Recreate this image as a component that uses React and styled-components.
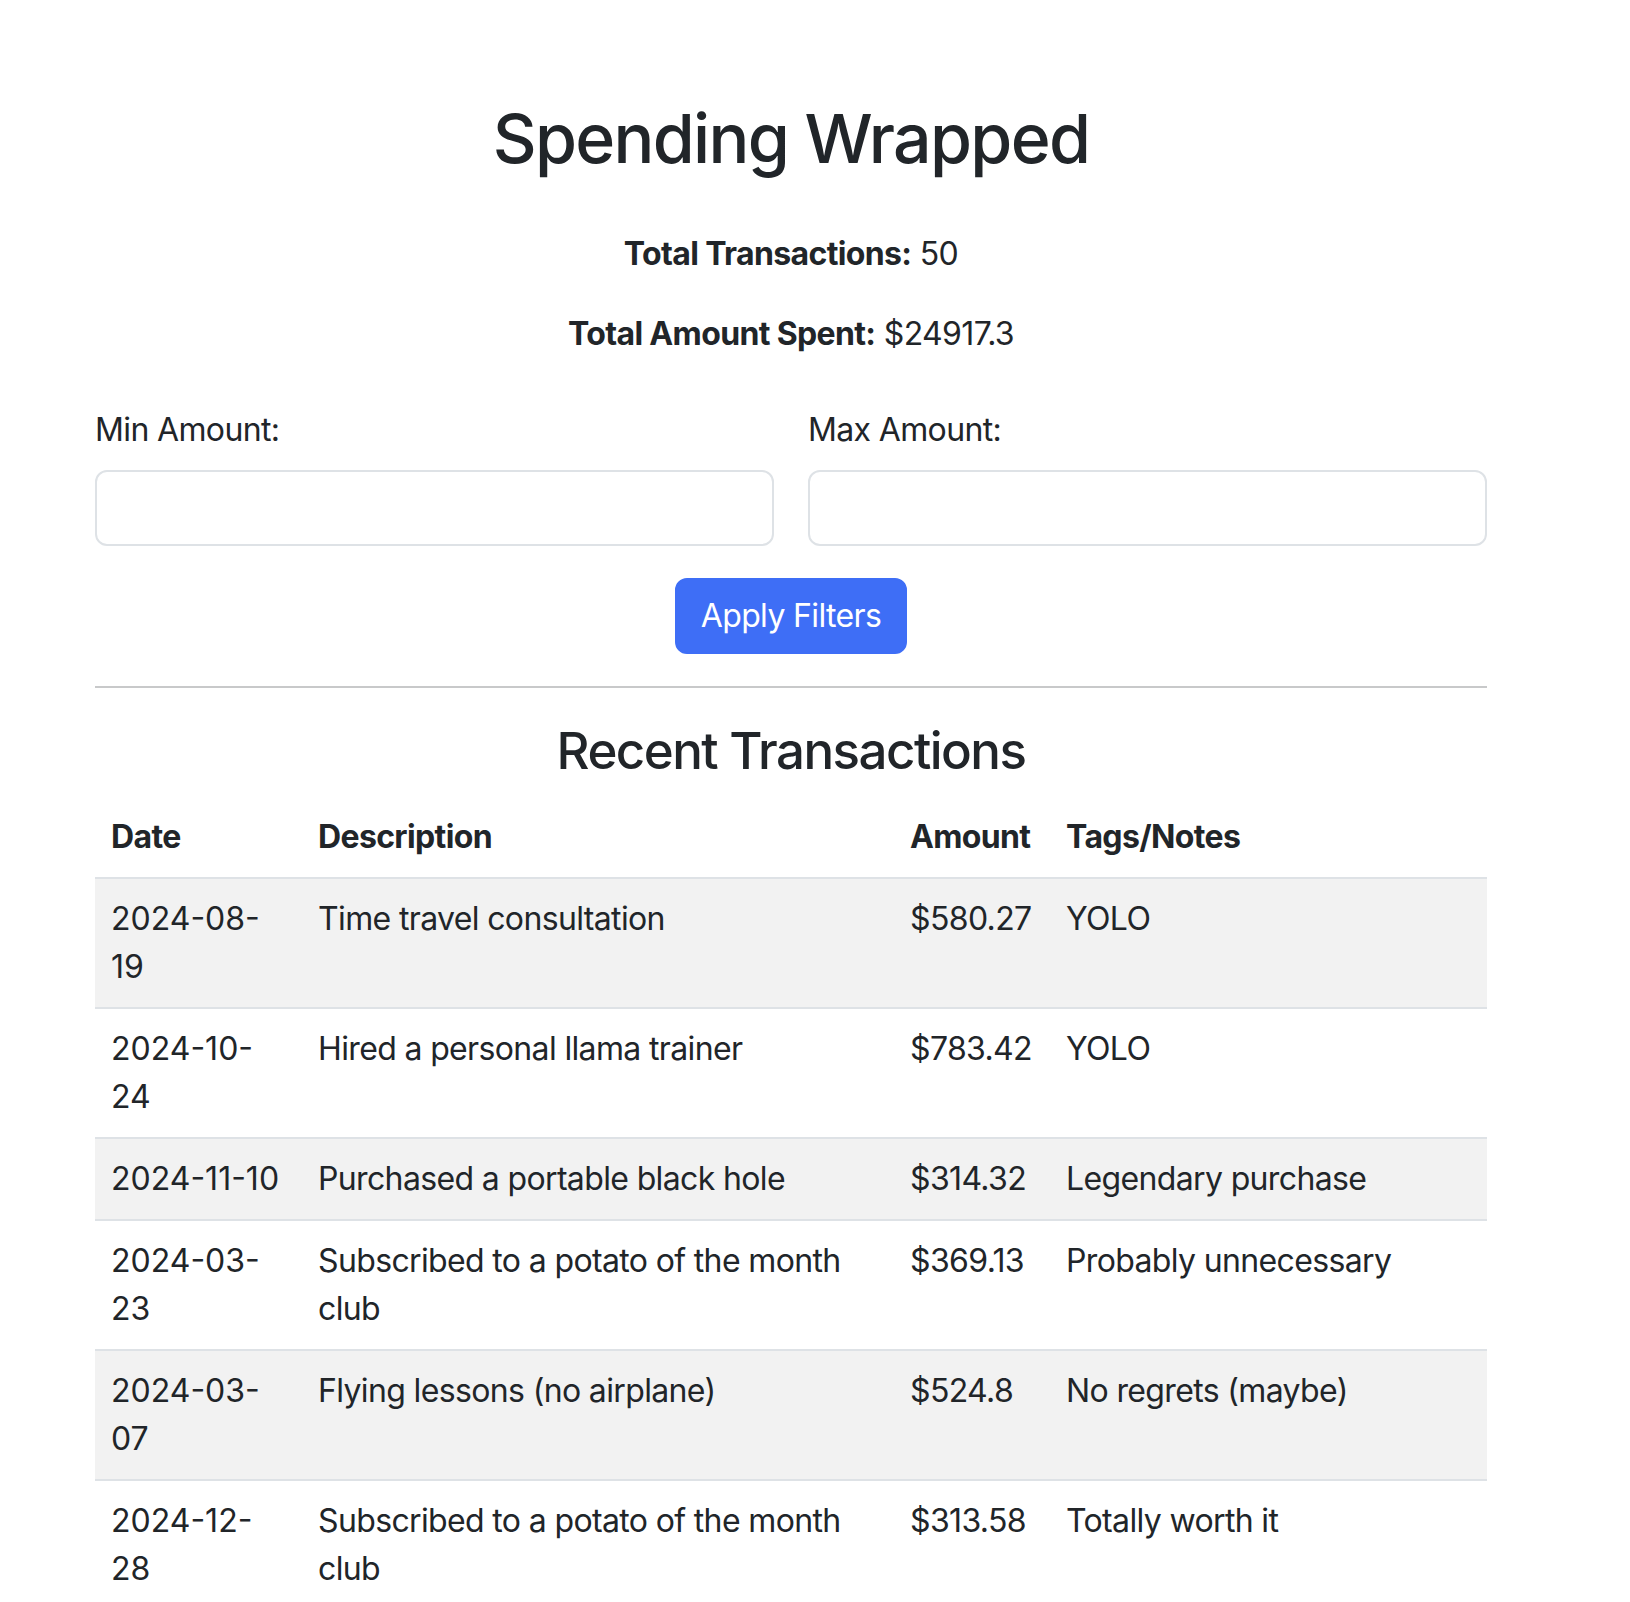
import React from "react";
import styled, { createGlobalStyle } from "styled-components";

const transactions = [
  { date: "2024-08-19", description: "Time travel consultation", amount: 580.27, note: "YOLO" },
  { date: "2024-10-24", description: "Hired a personal llama trainer", amount: 783.42, note: "YOLO" },
  { date: "2024-11-10", description: "Purchased a portable black hole", amount: 314.32, note: "Legendary purchase" },
  { date: "2024-03-23", description: "Subscribed to a potato of the month club", amount: 369.13, note: "Probably unnecessary" },
  { date: "2024-03-07", description: "Flying lessons (no airplane)", amount: 524.8, note: "No regrets (maybe)" },
  { date: "2024-12-28", description: "Subscribed to a potato of the month club", amount: 313.58, note: "Totally worth it" },
];

const GlobalStyle = createGlobalStyle`
  * { box-sizing: border-box; }
  body {
    margin: 0;
    background: #fff;
    color: #212529;
    font-family: Inter, "Noto Sans", sans-serif;
    font-size: 32px;
    line-height: 1.5;
    letter-spacing: -0.02em;
  }
`;

const App = () => {
  return (
    <>
      <GlobalStyle />
      <Page>
        <Container>
          <Title>Spending Wrapped</Title>
          <Summary>
            <strong>Total Transactions:</strong> 50
          </Summary>
          <Summary>
            <strong>Total Amount Spent:</strong> $24917.3
          </Summary>

          <FilterForm onSubmit={(e) => e.preventDefault()}>
            <FieldRow>
              <Field>
                <Label htmlFor="min">Min Amount:</Label>
                <Input id="min" type="number" />
              </Field>
              <Field>
                <Label htmlFor="max">Max Amount:</Label>
                <Input id="max" type="number" />
              </Field>
            </FieldRow>
            <ApplyButton type="submit">Apply Filters</ApplyButton>
          </FilterForm>

          <Divider />

          <SectionTitle>Recent Transactions</SectionTitle>
          <Table>
            <colgroup>
              <Col $w={207} />
              <Col $w={592} />
              <Col $w={156} />
              <Col />
            </colgroup>
            <thead>
              <tr>
                <Th>Date</Th>
                <Th>Description</Th>
                <Th>Amount</Th>
                <Th>Tags/Notes</Th>
              </tr>
            </thead>
            <tbody>
              {transactions.map((t, i) => (
                <Row key={i} $striped={i % 2 === 0}>
                  <DateCell>{t.date}</DateCell>
                  <Td>{t.description}</Td>
                  <Td>${t.amount}</Td>
                  <Td>{t.note}</Td>
                </Row>
              ))}
            </tbody>
          </Table>
        </Container>
      </Page>
    </>
  );
};

export default App;

const Page = styled.div`
  padding: 98px 143px 0 95px;
`;

const Container = styled.div`
  width: 100%;
  max-width: 1392px;
`;

const Title = styled.h1`
  margin: 0 0 50px;
  font-size: 68px;
  font-weight: 500;
  line-height: 1.2;
  letter-spacing: -0.025em;
  text-align: center;
`;

const Summary = styled.p`
  margin: 0 0 32px;
  text-align: center;

  strong {
    font-weight: 700;
  }
`;

const FilterForm = styled.form`
  margin-top: 48px;
  display: flex;
  flex-direction: column;
  align-items: center;
`;

const FieldRow = styled.div`
  width: 100%;
  display: grid;
  grid-template-columns: 1fr 1fr;
  gap: 34px;
  margin-bottom: 32px;
`;

const Field = styled.div`
  display: flex;
  flex-direction: column;
`;

const Label = styled.label`
  margin-bottom: 16px;
`;

const Input = styled.input`
  height: 76px;
  padding: 12px 24px;
  font: inherit;
  color: #212529;
  background: #fff;
  border: 2px solid #dee2e6;
  border-radius: 12px;
  appearance: textfield;
`;

const ApplyButton = styled.button`
  padding: 12px 24px;
  font: inherit;
  letter-spacing: inherit;
  color: #fff;
  background: #3e6ef6;
  border: 2px solid #3e6ef6;
  border-radius: 12px;
  cursor: pointer;
`;

const Divider = styled.hr`
  margin: 32px 0;
  border: 0;
  border-top: 2px solid #c8c9ca;
`;

const SectionTitle = styled.h3`
  margin: 0 0 16px;
  font-size: 51px;
  font-weight: 500;
  line-height: 1.2;
  letter-spacing: -0.03em;
  text-align: center;
`;

const Table = styled.table`
  width: 100%;
  table-layout: fixed;
  border-collapse: collapse;
`;

const Col = styled.col`
  width: ${({ $w }) => ($w ? `${$w}px` : "auto")};
`;

const Th = styled.th`
  padding: 16px;
  text-align: left;
  font-weight: 700;
  border-bottom: 2px solid #dee2e6;
`;

const Row = styled.tr`
  background: ${({ $striped }) => ($striped ? "#f2f2f2" : "#fff")};
`;

const Td = styled.td`
  padding: 16px;
  vertical-align: top;
  border-bottom: 2px solid #dee2e6;
`;

const DateCell = styled(Td)`
  letter-spacing: 0;
`;
